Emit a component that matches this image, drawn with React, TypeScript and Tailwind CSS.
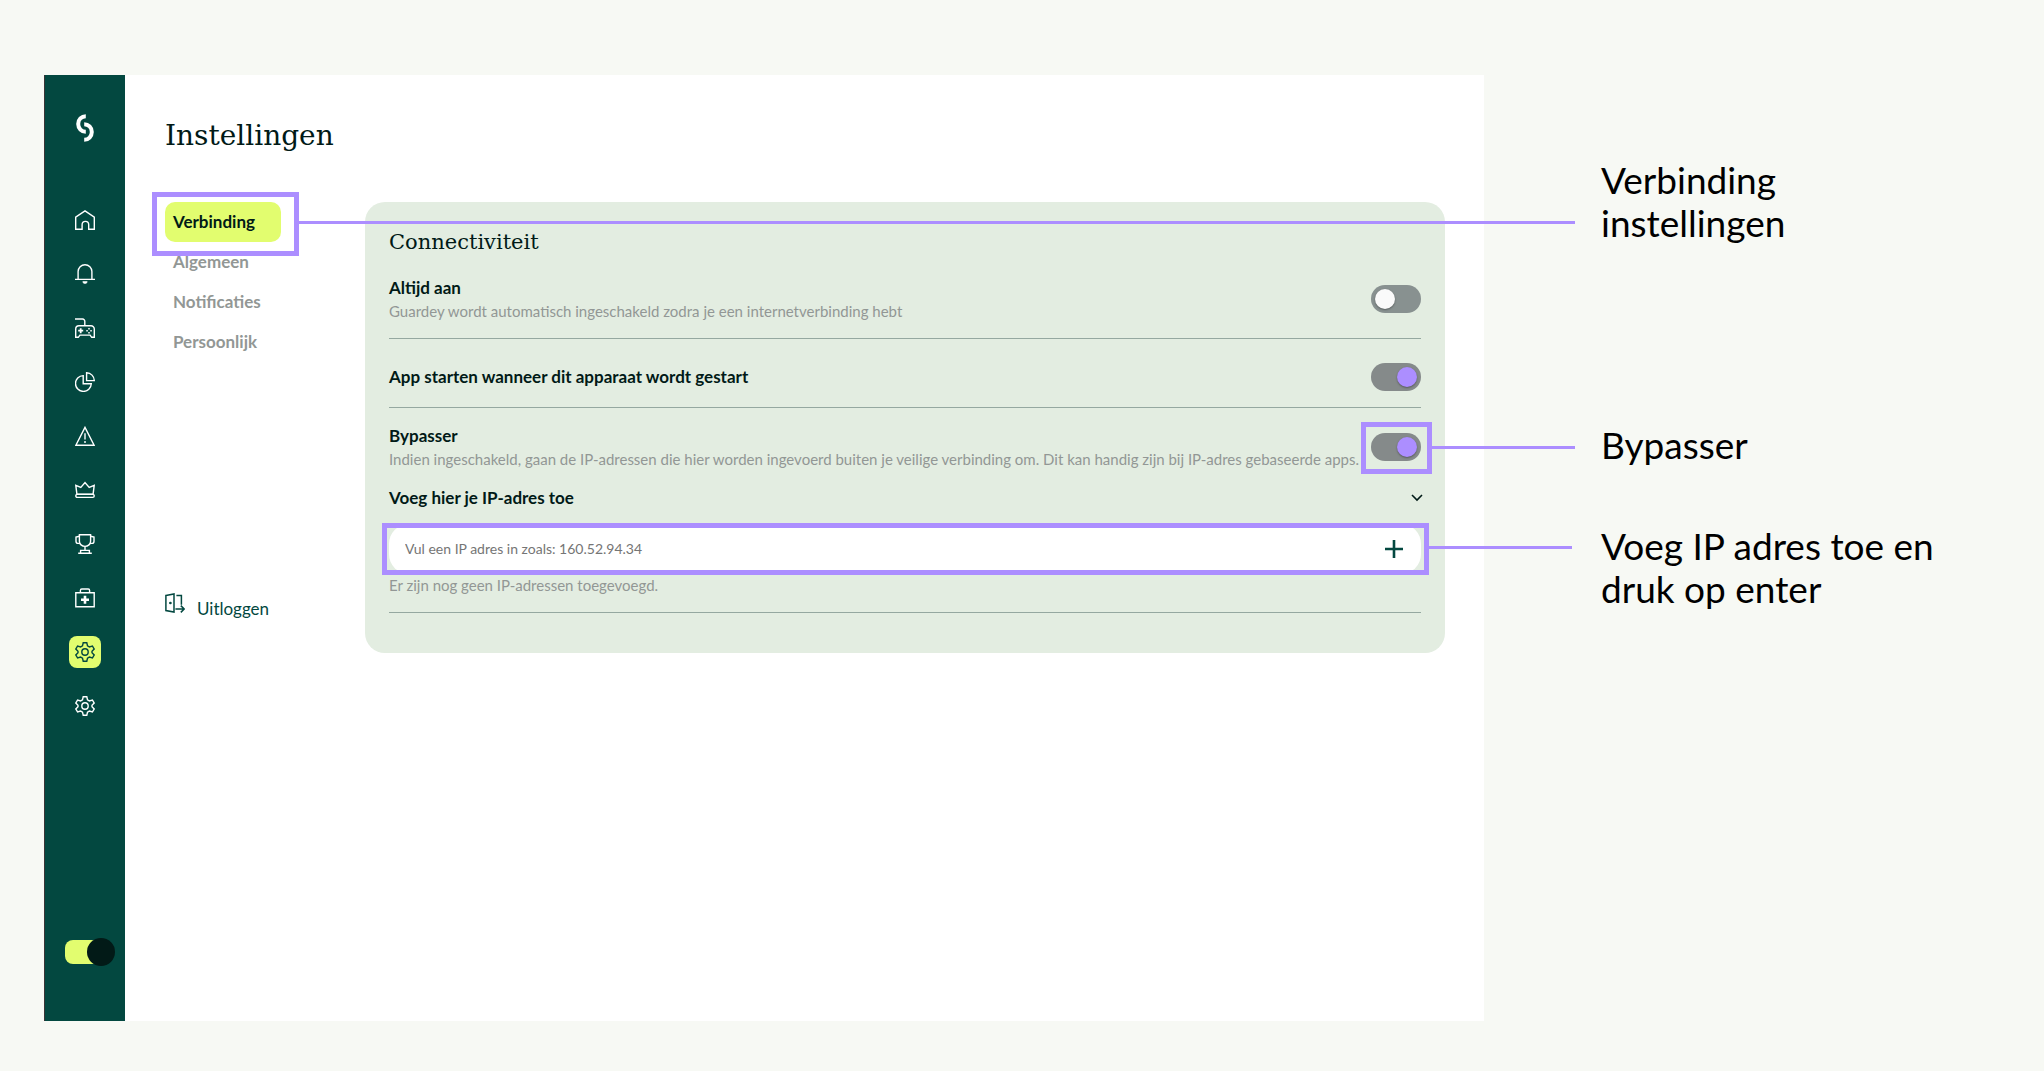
import type { ReactNode } from "react";

const NAV_ICONS: { label: string; active?: boolean; icon: ReactNode }[] = [
  {
    label: "Home",
    icon: <path d="M.7 7.2 10 .9l9.3 6.3v12.1h-5.6v-4.6a3.3 3.3 0 0 0-6.6 0v4.6H.7z" />,
  },
  {
    label: "Meldingen",
    icon: (
      <>
        <path d="M0 15.4h20M3.1 15.4V7.6a6.9 6.9 0 0 1 13.8 0v7.8" />
        <path d="M7.8 17.6h4.4a2.2 2 0 0 1-4.4 0z" fill="currentColor" strokeWidth="0.6" />
      </>
    ),
  },
  {
    label: "Training",
    icon: (
      <>
        <path d="M0 1h7.6a2.2 2.2 0 0 1 2.2 2.2v4.4" />
        <path d="M4 7.8h12a3.3 3.3 0 0 1 3.3 3.3v8.2h-2.6l-1.6-2.2H4.9l-1.6 2.2H.7v-8.2A3.3 3.3 0 0 1 4 7.8z" />
        <path d="M5.7 10.2v5M3.2 12.7h5" strokeWidth="1.8" />
        <path d="M14 10v1.5M14 14v1.5M11.3 12.7h1.5M15.3 12.7h1.5" strokeWidth="1.5" />
      </>
    ),
  },
  {
    label: "Rapporten",
    icon: (
      <>
        <path d="M8.2 3.6a7.9 7.9 0 1 0 8.1 8.2H8.2z" />
        <path d="M11.6.8v7.8h7.7A7.8 7.8 0 0 0 11.6.8z" />
      </>
    ),
  },
  {
    label: "Waarschuwingen",
    icon: (
      <>
        <path d="M10 1.4.9 19.2h18.2z" />
        <path d="M10 7.2v6.2M10 15v2" />
      </>
    ),
  },
  {
    label: "Ranglijst",
    icon: (
      <>
        <path d="M1.9 14.2.8 5.4l5 2L10 2.6l4.2 4.8 5-2-1.1 8.8z" />
        <rect x=".8" y="14.4" width="18.4" height="3" rx="1.4" />
      </>
    ),
  },
  {
    label: "Prestaties",
    icon: (
      <>
        <path d="M4.4.8h11.2v6.4a5.6 5.2 0 0 1-11.2 0zM10 12.4v3.8M5.6 19.2v-2.8h8.8v2.8M3.2 19.3h13.6" />
        <path d="M4.4 2.2 1 3v4.2a2.2 2.2 0 0 0 2.2 2.2h2M15.6 2.2 19 3v4.2a2.2 2.2 0 0 1-2.2 2.2h-2" />
      </>
    ),
  },
  {
    label: "Hulp",
    icon: (
      <>
        <path d="M.8 4.8h18.4v14H.8zM5.4 4.6V2.4A1.4 1.4 0 0 1 6.8 1h6.4a1.4 1.4 0 0 1 1.4 1.4v2.2" />
        <path d="M10 7.8v8M6 11.8h8" strokeWidth="2.6" />
      </>
    ),
  },
  { label: "Instellingen", active: true, icon: <Gear /> },
  { label: "Beheer", icon: <Gear /> },
];

const TABS = ["Algemeen", "Notificaties", "Persoonlijk"];

function Gear() {
  return (
    <>
      <path d="M8.2.8h3.6l.7 3 1.9 1.1 3-.9 1.8 3.1L17 9.2v1.6l2.2 2.1-1.8 3.1-3-.9-1.9 1.1-.7 3H8.2l-.7-3-1.9-1.1-3 .9L.8 12.9 3 10.8V9.2L.8 7.1 2.6 4l3 .9 1.9-1.1z" />
      <circle cx="10" cy="10" r="3.2" />
    </>
  );
}

function Logo() {
  return (
    <svg viewBox="0 0 18 28" className="h-7 w-[18px]" fill="none" stroke="currentColor" strokeWidth="4">
      <path d="M9.8 2.2C5.5 2.2 2.2 5.6 2.2 10s3.3 7.8 7.6 7.8" />
      <path d="M8.2 10.2c4.3 0 7.6 3.4 7.6 7.8s-3.3 7.8-7.6 7.8" />
    </svg>
  );
}

function Toggle({ id, on }: { id: string; on?: boolean }) {
  return (
    <input
      id={id}
      type="checkbox"
      role="switch"
      defaultChecked={on}
      className="block h-7 w-[50px] shrink-0 cursor-pointer appearance-none rounded-[14px] bg-[#889190] p-1 before:block before:size-5 before:rounded-full before:bg-[#fafafa] before:shadow-[0_1px_2px_rgba(0,0,0,0.35)] checked:bg-[#858a8a] checked:before:ml-[22px] checked:before:bg-[#ac8eff]"
    />
  );
}

// Purple frame drawn around a highlighted control
function Frame({ className }: { className: string }) {
  return (
    <span
      aria-hidden="true"
      className={`pointer-events-none absolute z-10 border-[5px] border-[#ac8eff] ${className}`}
    />
  );
}

function Line({ className }: { className: string }) {
  return (
    <span
      aria-hidden="true"
      className={`pointer-events-none absolute z-10 h-[3px] bg-[#ac8eff] ${className}`}
    />
  );
}

function Sidebar() {
  return (
    <aside className="flex w-[81px] shrink-0 flex-col items-center bg-[#034840] pt-[39px] pb-[57px] text-white shadow-[inset_1px_0_0_#3a3436]">
      <Logo />
      <nav className="mt-[62px] flex flex-col gap-[22px]">
        {NAV_ICONS.map((item) => (
          <button
            key={item.label}
            type="button"
            aria-label={item.label}
            className={`flex size-8 items-center justify-center rounded-lg ${
              item.active ? "bg-[#e2fd6f] text-[#034840]" : ""
            }`}
          >
            <svg viewBox="0 0 20 20" className="size-5" fill="none" stroke="currentColor" strokeWidth="1.4">
              {item.icon}
            </svg>
          </button>
        ))}
      </nav>
      <input
        type="checkbox"
        role="switch"
        aria-label="Beveiligde verbinding"
        defaultChecked
        className="mt-auto ml-[11px] flex h-6 w-[50px] appearance-none items-center justify-end rounded-lg bg-[linear-gradient(to_right,#e2fd6f_36px,transparent_36px)] before:block before:size-7 before:shrink-0 before:rounded-full before:bg-[#021a17]"
      />
    </aside>
  );
}

function Connectivity() {
  return (
    <section className="min-w-0 flex-1 rounded-[20px] bg-[#e3ede1] px-6 pt-6 pb-10 text-[#011a17]">
      <h2 className="font-['DejaVu_Serif',serif] text-[21px] leading-8">Connectiviteit</h2>

      <div className="mt-[18px] flex items-center justify-between border-b border-[#95a8a0] pb-4">
        <div>
          <label htmlFor="always-on" className="block text-[17px] leading-6 font-bold">
            Altijd aan
          </label>
          <p className="text-[15px] leading-[22px] text-[#929795]">
            Guardey wordt automatisch ingeschakeld zodra je een internetverbinding hebt
          </p>
        </div>
        <Toggle id="always-on" />
      </div>

      <div className="flex items-center justify-between border-b border-[#95a8a0] pt-6 pb-4">
        <label htmlFor="autostart" className="text-[17px] leading-6 font-bold">
          App starten wanneer dit apparaat wordt gestart
        </label>
        <Toggle id="autostart" on />
      </div>

      <div className="border-b border-[#95a8a0] py-4">
        <div className="flex items-center justify-between">
          <div>
            <label htmlFor="bypasser" className="block text-[17px] leading-6 font-bold">
              Bypasser
            </label>
            <p className="text-[15px] leading-[22px] text-[#929795]">
              Indien ingeschakeld, gaan de IP-adressen die hier worden ingevoerd buiten je veilige
              verbinding om. Dit kan handig zijn bij IP-adres gebaseerde apps.
            </p>
          </div>
          <div className="relative shrink-0">
            <Toggle id="bypasser" on />
            <Frame className="-top-[11px] -right-[11px] -bottom-[13px] -left-[10px]" />
            <Line className="top-[13px] left-[60px] w-[144px]" />
          </div>
        </div>

        <button
          type="button"
          aria-expanded="true"
          className="mt-4 flex w-full items-center justify-between text-[17px] leading-6 font-bold"
        >
          Voeg hier je IP-adres toe
          <svg viewBox="0 0 12 8" className="-mr-0.5 h-2 w-3" fill="none" stroke="currentColor" strokeWidth="1.6">
            <path d="m1 1 5 5 5-5" />
          </svg>
        </button>

        <form className="relative mt-[14px] flex h-[50px] items-center rounded-[20px] bg-white pr-[18px] pl-4">
          <input
            type="text"
            aria-label="IP-adres"
            placeholder="Vul een IP adres in zoals: 160.52.94.34"
            className="min-w-0 flex-1 bg-transparent text-sm outline-none placeholder:text-[#757575]"
          />
          <button type="button" aria-label="Toevoegen" className="text-[#034840]">
            <svg viewBox="0 0 18 18" className="size-[18px]" stroke="currentColor" strokeWidth="2.6">
              <path d="M9 0v18M0 9h18" />
            </svg>
          </button>
          <Frame className="-top-px -right-2 -bottom-px -left-[7px]" />
          <Line className="top-[22px] left-full ml-2 w-[143px]" />
        </form>
        <p className="text-[15px] leading-[22px] text-[#929795]">
          Er zijn nog geen IP-adressen toegevoegd.
        </p>
      </div>
    </section>
  );
}

export default function App() {
  return (
    <div className="flex min-h-screen bg-[#f7f9f4] pt-[75px] pr-6 pb-[50px] pl-11 font-[Lato,sans-serif]">
      <div className="flex min-w-0 flex-1 bg-white">
        <Sidebar />
        <main className="min-w-0 flex-1 pt-10 pr-[39px] pl-10">
          <h1 className="font-['DejaVu_Serif',serif] text-[28px] leading-[42px] text-[#011a17]">
            Instellingen
          </h1>

          <div className="relative mt-[45px] flex items-start">
            <Line className="top-[19px] left-[134px] -right-[130px]" />

            <div className="w-[200px] shrink-0">
              <nav className="flex w-[116px] flex-col text-[17px] font-bold text-[#929795]">
                <div className="relative">
                  <a
                    href="#verbinding"
                    className="flex h-10 items-center rounded-[10px] bg-[#e2fd6f] px-2 text-[#011a17]"
                  >
                    Verbinding
                  </a>
                  <Frame className="-top-[10px] -right-[18px] -bottom-[14px] -left-[13px]" />
                </div>
                {TABS.map((tab) => (
                  <a key={tab} href={`#${tab.toLowerCase()}`} className="flex h-10 items-center px-2">
                    {tab}
                  </a>
                ))}
              </nav>

              <button type="button" className="mt-[231px] flex items-end gap-3 text-[#034840]">
                <svg viewBox="0 0 20 20" className="mb-2 size-5" fill="none" stroke="currentColor" strokeWidth="1.5">
                  <path d="M.9 2.4 9 .9v18.2L.9 17.6zM11.4 2.6h5v9.2M10.4 16h8.4M15.8 12.6l3.4 3.4-3.4 3.4" />
                  <circle cx="5.4" cy="10" r=".6" fill="currentColor" />
                </svg>
                <span className="text-[17px] leading-6">Uitloggen</span>
              </button>
            </div>

            <Connectivity />
          </div>
        </main>
      </div>

      <div className="ml-[117px] w-[419px] shrink-0 pt-[83px] text-[37px] leading-[43px] text-black">
        <p>
          Verbinding
          <br />
          instellingen
        </p>
        <p className="mt-[179px]">Bypasser</p>
        <p className="mt-[58px]">
          Voeg IP adres toe en
          <br />
          druk op enter
        </p>
      </div>
    </div>
  );
}
